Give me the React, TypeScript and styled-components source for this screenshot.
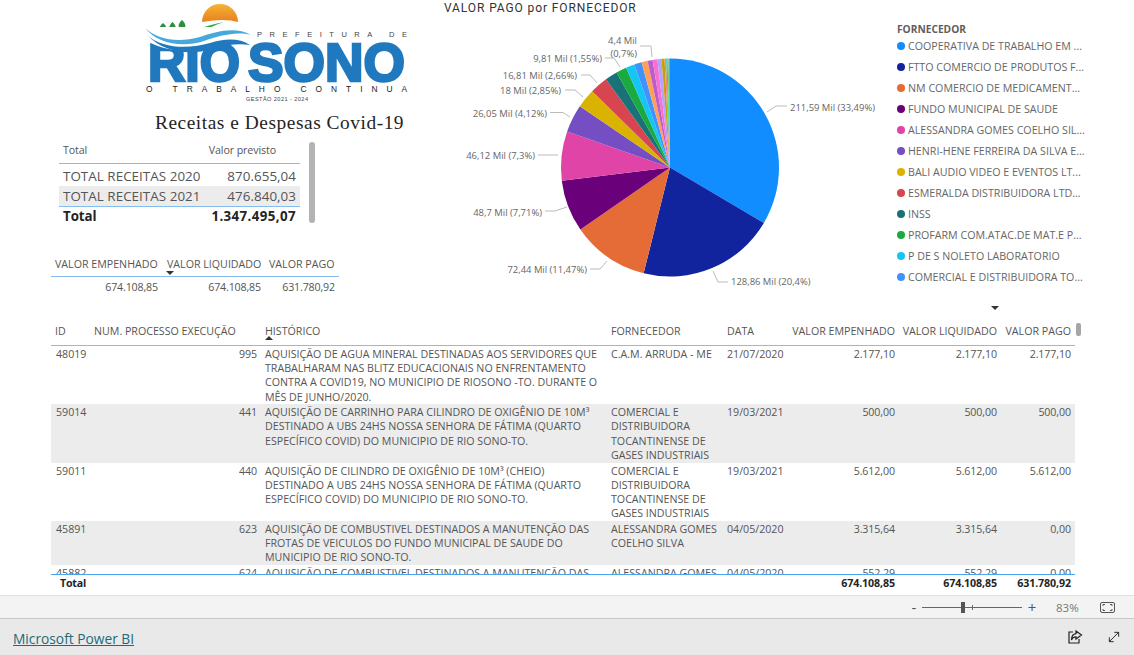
import React from "react";
import styled, { createGlobalStyle } from "styled-components";
import { MoveDiagonal } from "lucide-react";

const UI = `"Open Sans", "Noto Sans", "Liberation Sans", sans-serif`;
const RULE = "#86bdf0";

const Global = createGlobalStyle`
  html, body { margin: 0; padding: 0; background: #fff; overflow: hidden; }
  * { box-sizing: border-box; }
`;

const Page = styled.div`
  width: 1134px; height: 655px; display: flex; flex-direction: column;
  font-family: ${UI}; color: #555; background: #fff; overflow: hidden;
`;
const Report = styled.main`
  height: 595px; display: flex; flex-direction: column; flex: none;
`;
const Top = styled.section`
  height: 322px; flex: none; display: grid; grid-template-columns: 444px 453px 1fr;
`;
const LeftCol = styled.div`
  display: flex; flex-direction: column;
`;
const Logo = styled.svg`
  display: block; width: 290px; height: 105px; margin-left: 130px; flex: none;
`;
const ReportTitle = styled.h1`
  margin: 0 0 0 155px; height: 37px; font: 400 19.4px/36px "Liberation Serif", serif;
  letter-spacing: 0.53px; color: #252423; white-space: nowrap;
`;
const SummaryWrap = styled.div`
  display: flex; margin-left: 59px; gap: 9px; height: 81px;
`;
const SummaryTable = styled.div`
  width: 241px; display: flex; flex-direction: column;
`;
const SummaryHead = styled.div`
  height: 22px; flex: none; display: flex; justify-content: space-between; align-items: flex-start;
  padding: 1px 24px 0 4px; font-size: 10.67px; letter-spacing: -0.1px; line-height: 14px; border-bottom: 1px solid ${RULE}; color: #555;
`;
const SummaryRow = styled.div<{ $shade?: boolean }>`
  height: 20px; flex: none; display: flex; justify-content: space-between; align-items: center;
  padding: 1px 4px 0; font-size: 13.4px; letter-spacing: 0.04px; color: #555;
  background: ${(p) => (p.$shade ? "#ececec" : "transparent")};
  &:nth-child(2) { margin-top: 1.5px; }
`;
const SummaryTotal = styled.div`
  flex: 1; display: flex; justify-content: space-between; align-items: center;
  padding: 0 4px; font-size: 13.3px; font-weight: 700; color: #252423;
  border-top: 1px solid ${RULE}; letter-spacing: -0.05px;
`;
const SummaryTotalValue = styled.span`
  letter-spacing: 0.4px;
`;
const VScroll = styled.div`
  width: 6px; height: 81px; background: #b3b3b3; border-radius: 3px;
`;
const CardTable = styled.div`
  margin: 34px 0 0 51px; width: 288px; display: flex; flex-direction: column; font-size: 10.67px;
`;
const CardRow = styled.div<{ $head?: boolean }>`
  display: grid; grid-template-columns: 111px 103px 74px; height: ${(p) => (p.$head ? "20px" : "19px")};
  align-items: ${(p) => (p.$head ? "start" : "center")};
  border-bottom: ${(p) => (p.$head ? `1px solid ${RULE}` : "none")};
`;
const CardCell = styled.div<{ $right?: boolean }>`
  position: relative; padding: 0 4px; white-space: nowrap; line-height: 14px; text-align: ${(p) => (p.$right ? "right" : "left")};
  ${(p) => (p.$right ? "letter-spacing: -0.15px;" : "&:nth-child(2) { padding-left: 5px; }")}
`;
const Caret = styled.span<{ $up?: boolean }>`
  position: absolute; width: 0; height: 0; border-left: 4px solid transparent; border-right: 4px solid transparent;
  ${(p) => (p.$up ? "border-bottom: 4px solid #333;" : "border-top: 4px solid #333;")}
  left: 4px; top: 14px;
`;
const ChartCol = styled.div`
  display: flex; flex-direction: column;
`;
const ChartTitle = styled.h2`
  margin: 0; height: 16px; font: 400 12px/17px Roboto, sans-serif; letter-spacing: 0.9px; color: #333; white-space: nowrap;
`;
const Pie = styled.svg`
  display: block; width: 453px; height: 306px;
  text { font-family: ${UI}; font-size: 9.45px; fill: #666; }
`;
const Legend = styled.div`
  position: relative; padding-top: 22px; display: flex; flex-direction: column;
`;
const LegendTitle = styled.div`
  font-size: 10.2px; font-weight: 700; color: #605e5c; line-height: 14px; height: 13px;
`;
const LegendItem = styled.div`
  display: flex; align-items: center; height: 21px; font-size: 10.67px; color: #666; white-space: nowrap;
  gap: 3px; width: 200px;
`;
const Dot = styled.span<{ $c: string }>`
  width: 8px; height: 8px; border-radius: 50%; background: ${(p) => p.$c}; flex: none;
`;
const LegendMore = styled.span`
  margin: 19px 0 0 94px; width: 0; height: 0; border-left: 4px solid transparent; border-right: 4px solid transparent; border-top: 4px solid #333;
`;
const TableWrap = styled.section`
  position: relative; margin-left: 51px; width: 1024px; flex: 1; display: flex; flex-direction: column; min-height: 0;
`;
const COLS = "39px 171px 346px 116px 61px 115px 102px 74px";
const Grid = styled.div`
  display: grid; grid-template-columns: ${COLS};
`;
const HeadRow = styled(Grid)`
  height: 24px; flex: none; border-bottom: 1px solid ${RULE}; font-size: 10.67px; line-height: 18px;
`;
const HeadCell = styled.div<{ $right?: boolean }>`
  position: relative; padding: 0 4px; white-space: nowrap; text-align: ${(p) => (p.$right ? "right" : "left")};
  ${(p) => (p.$right ? "display:flex;justify-content:flex-end;" : "")}
`;
const TableBody = styled.div`
  height: 228px; flex: none; overflow: hidden;
`;
const DataRow = styled(Grid)<{ $shade?: boolean }>`
  background: ${(p) => (p.$shade ? "#ececec" : "#fff")};
  padding: 0.9px 0 0.7px; font-size: 10.67px; line-height: 14.2px; color: #555;
`;
const Cell = styled.div<{ $right?: boolean }>`
  padding: 0 4px; text-align: ${(p) => (p.$right ? "right" : "left")};
  ${(p) => (p.$right ? "letter-spacing: -0.1px;" : "")}
  &:first-child { padding-left: 5px; }
`;
const Line = styled.div`
  white-space: nowrap;
`;
const TotalRow = styled(Grid)`
  flex: 1; border-top: 1px solid #4aa3ee; font-size: 10.67px; font-weight: 700; color: #252423; line-height: 17px;
`;
const TotalLabel = styled.div`
  grid-column: 1 / 6; padding-left: 9px; letter-spacing: -0.2px;
`;
const TableThumb = styled.div`
  position: absolute; left: 1025px; top: 1px; width: 5px; height: 13px; border-radius: 2px; background: #a6a6a6;
`;
const ZoomBar = styled.div`
  height: 23px; flex: none; background: #f3f3f3; border-top: 1px solid #e1e1e1; display: flex; align-items: center;
  justify-content: flex-end; color: #666; font-size: 11.5px; padding-right: 19px;
`;
const ZoomSign = styled.span`
  font-size: 15px; line-height: 13px; color: #555; width: 10px; text-align: center;
`;
const Slider = styled.div`
  position: relative; width: 100px; height: 1px; background: #666; margin: 0 5px 0 3px;
`;
const Thumb = styled.span`
  position: absolute; left: 39px; top: -5px; width: 4px; height: 11px; background: #555;
`;
const Tick = styled.span`
  position: absolute; left: 50px; top: -2px; width: 1px; height: 5px; background: #666;
`;
const Pct = styled.span`
  margin: 0 20px 0 19px; width: 24px; color: #777; white-space: nowrap;
`;
const Footer = styled.footer`
  flex: 1; background: #e9e9e9; border-top: 1px solid #c8c8c8; display: flex; align-items: center; padding: 0 12px 0 13px;
`;
const BrandLink = styled.a`
  font-size: 13.75px; color: #1b6b78; text-decoration: underline; margin-right: auto; margin-top: 2px;
`;
const FooterIcon = styled.span`
  display: flex; width: 16px; height: 16px; color: #222; margin-left: 23px;
`;

const slices = [
  [33.49, "#118DFF"], [20.4, "#12239E"], [11.47, "#E66C37"], [7.71, "#6B007B"], [7.3, "#E044A7"], [4.12, "#744EC2"],
  [2.85, "#D9B300"], [2.66, "#D64550"], [1.85, "#197278"], [1.55, "#1AAB40"], [1.3, "#15C6F4"], [1.1, "#4092FF"],
  [0.9, "#FFA058"], [0.75, "#BE5DC9"], [0.7, "#F472D0"], [0.6, "#B5A1FF"], [0.45, "#C4A200"], [0.25, "#FF8080"],
  [0.2, "#00DBBC"], [0.15, "#5BD667"], [0.2, "#B887AD"],
] as [number, string][];

const CX = 670, CY = 167.5, R = 109;
function slicePaths() {
  const total = slices.reduce((s, x) => s + x[0], 0);
  let a = 0;
  return slices.map(([v, c]) => {
    const a0 = (a / total) * Math.PI * 2;
    a += v;
    const a1 = (a / total) * Math.PI * 2;
    const p = (t: number) => `${(CX + R * Math.sin(t)).toFixed(2)} ${(CY - R * Math.cos(t)).toFixed(2)}`;
    return { d: `M${CX} ${CY} L${p(a0)} A${R} ${R} 0 ${a1 - a0 > Math.PI ? 1 : 0} 1 ${p(a1)} Z`, c };
  });
}

const pieLabels: { t: string; x: number; y: number; a?: "end"; pts: string }[] = [
  { t: "211,59 Mil (33,49%)", x: 790, y: 111, pts: "767,112 776,106 787,106" },
  { t: "128,86 Mil (20,4%)", x: 731, y: 285, pts: "713,271 718,282 728,282" },
  { t: "72,44 Mil (11,47%)", x: 587, y: 273, a: "end", pts: "590,269 600,269 607,261" },
  { t: "48,7 Mil (7,71%)", x: 542, y: 216, a: "end", pts: "545,211 555,211 567,207" },
  { t: "46,12 Mil (7,3%)", x: 535, y: 159, a: "end", pts: "538,155 558,155" },
  { t: "26,05 Mil (4,12%)", x: 547, y: 117, a: "end", pts: "550,112.5 563,112.5 570,117" },
  { t: "18 Mil (2,85%)", x: 561, y: 94, a: "end", pts: "565,90 575,90 583,97" },
  { t: "16,81 Mil (2,66%)", x: 577, y: 79, a: "end", pts: "581,75 590,75 597,83" },
  { t: "9,81 Mil (1,55%)", x: 602, y: 62, a: "end", pts: "605,58 614,58 620,67" },
  { t: "4,4 Mil", x: 637, y: 44, a: "end", pts: "640,46 651,46 652,57" },
  { t: "(0,7%)", x: 637, y: 57, a: "end", pts: "" },
];

const legend = [
  ["#118DFF", "COOPERATIVA DE TRABALHO EM ..."], ["#12239E", "FTTO COMERCIO DE PRODUTOS F..."],
  ["#E66C37", "NM COMERCIO DE MEDICAMENT..."], ["#6B007B", "FUNDO MUNICIPAL DE SAUDE"],
  ["#E044A7", "ALESSANDRA GOMES COELHO SIL..."], ["#744EC2", "HENRI-HENE FERREIRA DA SILVA E..."],
  ["#D9B300", "BALI AUDIO VIDEO E EVENTOS LT..."], ["#D64550", "ESMERALDA DISTRIBUIDORA LTD..."],
  ["#197278", "INSS"], ["#1AAB40", "PROFARM COM.ATAC.DE MAT.E P..."],
  ["#15C6F4", "P DE S NOLETO LABORATORIO"], ["#4092FF", "COMERCIAL E DISTRIBUIDORA TO..."],
];

const rows = [
  { id: "48019", n: "995", h: ["AQUISIÇÃO DE AGUA MINERAL DESTINADAS AOS SERVIDORES QUE", "TRABALHARAM NAS BLITZ EDUCACIONAIS NO ENFRENTAMENTO", "CONTRA A COVID19, NO MUNICIPIO DE RIOSONO -TO. DURANTE O", "MÊS DE JUNHO/2020."], f: ["C.A.M. ARRUDA - ME"], d: "21/07/2020", v: ["2.177,10", "2.177,10", "2.177,10"] },
  { id: "59014", n: "441", h: ["AQUISIÇÃO DE CARRINHO PARA CILINDRO DE OXIGÊNIO DE 10M³", "DESTINADO A UBS 24HS NOSSA SENHORA DE FÁTIMA (QUARTO", "ESPECÍFICO COVID) DO MUNICIPIO DE RIO SONO-TO."], f: ["COMERCIAL E", "DISTRIBUIDORA", "TOCANTINENSE DE", "GASES INDUSTRIAIS"], d: "19/03/2021", v: ["500,00", "500,00", "500,00"] },
  { id: "59011", n: "440", h: ["AQUISIÇÃO DE CILINDRO DE OXIGÊNIO DE 10M³ (CHEIO)", "DESTINADO A UBS 24HS NOSSA SENHORA DE FÁTIMA (QUARTO", "ESPECÍFICO COVID) DO MUNICIPIO DE RIO SONO-TO."], f: ["COMERCIAL E", "DISTRIBUIDORA", "TOCANTINENSE DE", "GASES INDUSTRIAIS"], d: "19/03/2021", v: ["5.612,00", "5.612,00", "5.612,00"] },
  { id: "45891", n: "623", h: ["AQUISIÇÃO DE COMBUSTIVEL DESTINADOS A MANUTENÇÃO DAS", "FROTAS DE VEICULOS DO FUNDO MUNICIPAL DE SAUDE DO", "MUNICIPIO DE RIO SONO-TO."], f: ["ALESSANDRA GOMES", "COELHO SILVA"], d: "04/05/2020", v: ["3.315,64", "3.315,64", "0,00"] },
  { id: "45882", n: "624", h: ["AQUISIÇÃO DE COMBUSTIVEL DESTINADOS A MANUTENÇÃO DAS", "FROTAS DE VEICULOS"], f: ["ALESSANDRA GOMES", "COELHO SILVA"], d: "04/05/2020", v: ["552,29", "552,29", "0,00"] },
];

const Lines = ({ l }: { l: string[] }) => (
  <>
    {l.map((s, i) => (
      <Line key={i}>{s}</Line>
    ))}
  </>
);

export default function App() {
  return (
    <Page>
      <Global />
      <Report>
        <Top>
          <LeftCol>
            <Logo viewBox="130 0 290 105">
              <defs>
                <linearGradient id="sun" x1="0" y1="0" x2="0" y2="1">
                  <stop offset="0" stopColor="#f5b335" />
                  <stop offset="1" stopColor="#e8801e" />
                </linearGradient>
              </defs>
              <path d="M202 22 A18 18 0 0 1 238 22 Q225 18 202 22Z" fill="url(#sun)" />
              <path d="M163 23 C168 27 168 32 163 34.5 C158 32 158 27 163 23Z" fill="#2f8f3c" />
              <path d="M172.5 22 C177 26 177 31 172.5 33.5 C168 31 168 26 172.5 22Z" fill="#2f8f3c" />
              <path d="M182 20 C186.5 24 186.5 28.5 182 31 C177.5 28.5 177.5 24 182 20Z" fill="#2f8f3c" />
              <path d="M170 35 C186 36 200 26 224 22 C208 27 192 39 174 38 Z" fill="#3ba54a" />
              <text x="148" y="81" textLength="92" lengthAdjust="spacingAndGlyphs" fontFamily="Liberation Sans" fontWeight="700" fontSize="53" fill="#2079be" stroke="#2079be" strokeWidth="2.6">RIO</text>
              <text x="248" y="81" textLength="157" lengthAdjust="spacingAndGlyphs" fontFamily="Liberation Sans" fontWeight="700" fontSize="53" fill="#2079be" stroke="#2079be" strokeWidth="2.6">SONO</text>
              <path d="M143 27 L246 27 L246 40 C234 38 222 42 206 47 C184 53 160 51 143 38 Z" fill="#fff" />
              <path d="M145 28 C158 40 178 43 200 37 C215 32 235 26 251 35 C236 31 218 36 204 41 C182 48 158 44 145 28Z" fill="#46a9dd" />
              <path d="M147 35 C162 49 190 49 210 43 C225 38 240 38 250 45 C238 43 226 45 212 49 C192 55 165 54 147 35Z" fill="#2079be" />
              <text x="257" y="37" textLength="150" fontFamily="Liberation Sans" fontSize="7.5" fill="#444">PREFEITURA DE</text>
              <text x="146" y="92" textLength="261" fontFamily="Liberation Sans" fontSize="8.4" fill="#222">O TRABALHO CONTINUA</text>
              <text x="246" y="101" textLength="62" fontFamily="Liberation Sans" fontSize="5.6" fill="#444">GESTÃO 2021 - 2024</text>
            </Logo>
            <ReportTitle>Receitas e Despesas Covid-19</ReportTitle>
            <SummaryWrap>
              <SummaryTable>
                <SummaryHead><span>Total</span><span>Valor previsto</span></SummaryHead>
                <SummaryRow><span>TOTAL RECEITAS 2020</span><span>870.655,04</span></SummaryRow>
                <SummaryRow $shade><span>TOTAL RECEITAS 2021</span><span>476.840,03</span></SummaryRow>
                <SummaryTotal><span>Total</span><SummaryTotalValue>1.347.495,07</SummaryTotalValue></SummaryTotal>
              </SummaryTable>
              <VScroll />
            </SummaryWrap>
            <CardTable>
              <CardRow $head>
                <CardCell>VALOR EMPENHADO</CardCell>
                <CardCell>VALOR LIQUIDADO<Caret /></CardCell>
                <CardCell>VALOR PAGO</CardCell>
              </CardRow>
              <CardRow>
                <CardCell $right>674.108,85</CardCell>
                <CardCell $right>674.108,85</CardCell>
                <CardCell $right>631.780,92</CardCell>
              </CardRow>
            </CardTable>
          </LeftCol>
          <ChartCol>
            <ChartTitle>VALOR PAGO por FORNECEDOR</ChartTitle>
            <Pie viewBox="444 16 453 306">
              {slicePaths().map((s, i) => (
                <path key={i} d={s.d} fill={s.c} />
              ))}
              {pieLabels.map((l, i) => (
                <g key={i}>
                  {l.pts && <polyline points={l.pts} fill="none" stroke="#bbb" strokeWidth="1" />}
                  <text x={l.x} y={l.y} textAnchor={l.a ?? "start"}>{l.t}</text>
                </g>
              ))}
            </Pie>
          </ChartCol>
          <Legend>
            <LegendTitle>FORNECEDOR</LegendTitle>
            {legend.map(([c, t]) => (
              <LegendItem key={t}><Dot $c={c} />{t}</LegendItem>
            ))}
            <LegendMore />
          </Legend>
        </Top>
        <TableWrap>
          <TableThumb />
          <HeadRow>
            <HeadCell>ID</HeadCell>
            <HeadCell>NUM. PROCESSO EXECUÇÃO</HeadCell>
            <HeadCell>HISTÓRICO<Caret $up /></HeadCell>
            <HeadCell>FORNECEDOR</HeadCell>
            <HeadCell>DATA</HeadCell>
            <HeadCell $right>VALOR EMPENHADO</HeadCell>
            <HeadCell $right>VALOR LIQUIDADO</HeadCell>
            <HeadCell $right>VALOR PAGO</HeadCell>
          </HeadRow>
          <TableBody>
            {rows.map((r, i) => (
              <DataRow key={r.id} $shade={i % 2 === 1}>
                <Cell>{r.id}</Cell>
                <Cell $right>{r.n}</Cell>
                <Cell><Lines l={r.h} /></Cell>
                <Cell><Lines l={r.f} /></Cell>
                <Cell>{r.d}</Cell>
                {r.v.map((v, j) => (
                  <Cell $right key={j}>{v}</Cell>
                ))}
              </DataRow>
            ))}
          </TableBody>
          <TotalRow>
            <TotalLabel>Total</TotalLabel>
            <Cell $right>674.108,85</Cell>
            <Cell $right>674.108,85</Cell>
            <Cell $right>631.780,92</Cell>
          </TotalRow>
        </TableWrap>
      </Report>
      <ZoomBar>
        <ZoomSign>-</ZoomSign>
        <Slider><Thumb /><Tick /></Slider>
        <ZoomSign>+</ZoomSign>
        <Pct>83%</Pct>
        <svg width="15" height="11" viewBox="0 0 15 11" fill="none" stroke="#555" strokeWidth="1">
          <rect x="0.5" y="0.5" width="14" height="10" rx="1.5" />
          <path d="M3 4 V2.5 H5 M10 2.5 H12 V4 M12 7 V8.5 H10 M5 8.5 H3 V7" />
        </svg>
      </ZoomBar>
      <Footer>
        <BrandLink href="#">Microsoft Power BI</BrandLink>
        <FooterIcon>
          <svg width="16" height="16" viewBox="0 0 16 16" fill="none" stroke="currentColor" strokeWidth="1.2">
            <path d="M6 3 H2 V14 H12 V10" />
            <path d="M9 2 L14.5 6 L9 10 V7.8 C6.5 7.8 5.2 9 4.5 11 C4.5 7.5 6 5 9 4.6 Z" />
          </svg>
        </FooterIcon>
        <FooterIcon>
          <MoveDiagonal size={16} strokeWidth={1.4} />
        </FooterIcon>
      </Footer>
    </Page>
  );
}
